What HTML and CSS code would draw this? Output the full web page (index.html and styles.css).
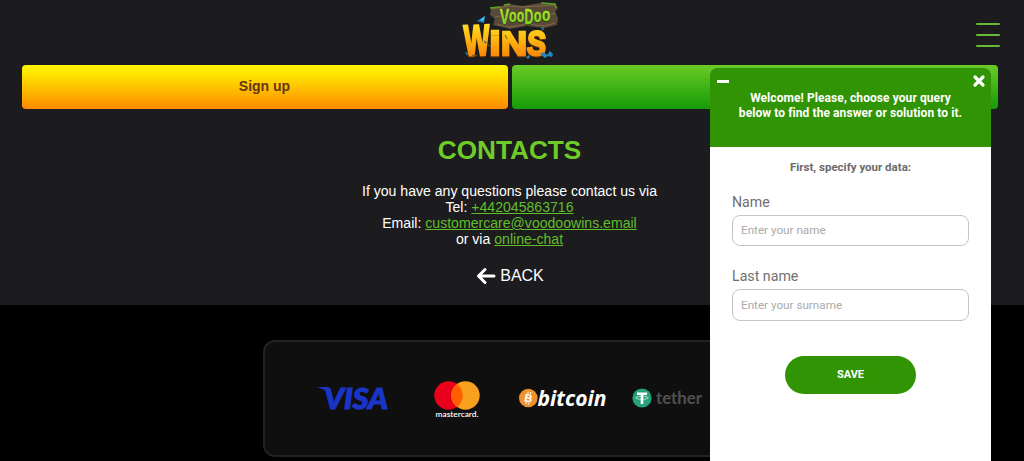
FILE: index.html
```html
<!DOCTYPE html>
<html lang="en">
<head>
<meta charset="utf-8">
<title>Voodoo Wins – Contacts</title>
<link rel="stylesheet" href="styles.css">
</head>
<body>
<div class="page">
  <header class="header">
    <svg class="logo" viewBox="0 0 120 65" role="img" aria-label="Voodoo Wins">
      <defs>
        <linearGradient id="gold" x1="0" y1="20" x2="0" y2="57" gradientUnits="userSpaceOnUse">
          <stop offset="0.05" stop-color="#ffe329"/><stop offset="0.5" stop-color="#ffb810"/><stop offset="1" stop-color="#f8860b"/>
        </linearGradient>
        <linearGradient id="slime" x1="0" y1="7" x2="0" y2="25" gradientUnits="userSpaceOnUse">
          <stop offset="0" stop-color="#b3e82b"/><stop offset="1" stop-color="#78cf20"/>
        </linearGradient>
      </defs>
      <path d="M41 8 60 4 72 6 90 3 105 4 108 8 105 12 108 18 107 25 94 28 77 26 60 29 43 25 45 19 40 15Z" fill="#594a38"/>
      <path d="M42 9 59 6 73 7 104 5M45 17 50 16M101 14 106 13M47 24 60 27 77 24 94 26 105 23" fill="none" stroke="#7e6846" stroke-width="1"/>
      <path d="M40 8 50 7M54 5 60 4M91 3 105 4 106 8" fill="none" stroke="#5ba420" stroke-width="1.500"/>
      <g class="logo-top">
        <text x="49.700" y="23.500" textLength="9.500" lengthAdjust="spacingAndGlyphs">V</text>
        <text x="59" y="22" textLength="7.600" lengthAdjust="spacingAndGlyphs" class="small">o</text>
        <text x="66.800" y="22" textLength="7.600" lengthAdjust="spacingAndGlyphs" class="small">o</text>
        <text x="74.500" y="23.500" textLength="9" lengthAdjust="spacingAndGlyphs">D</text>
        <text x="83.800" y="22" textLength="7.800" lengthAdjust="spacingAndGlyphs" class="small">o</text>
        <text x="92" y="21" textLength="8.500" lengthAdjust="spacingAndGlyphs" class="small">o</text>
      </g>
      <path d="M27 21 35 16 34 23Z" fill="#1689d2"/><path d="m30 20 5-4-2 5Z" fill="#5bc5ec"/>
      <g class="logo-main">
        <text x="14" y="55" textLength="25.500" font-size="43" lengthAdjust="spacingAndGlyphs" transform="rotate(-2 26 40)">W</text>
        <text x="39.500" y="55" textLength="11" font-size="33" lengthAdjust="spacingAndGlyphs">i</text>
        <text x="51" y="55" textLength="26" font-size="34" lengthAdjust="spacingAndGlyphs">N</text>
        <text x="77" y="55" textLength="19" font-size="34" lengthAdjust="spacingAndGlyphs" transform="rotate(3 86 45)">S</text>
      </g>
      <path d="m34 41 3 2 3 4M55 35 57 39M22 55l6 1M91 31l3-2" fill="none" stroke="#70551b"/>
      <path d="m15 52 3 1-1 3ZM90 54l4-2 3 3 3-4 3 3-1 3-4-1-3 2ZM76 57l3-2 1 2-2 2ZM34 41l2 1-1 2ZM91 28l3-1-1 3Z" fill="#2188bb"/>
    </svg>
    <button class="menu" aria-label="Menu"><span></span><span></span><span></span></button>
  </header>

  <div class="actions">
    <a class="action signup">Sign up</a>
    <a class="action login" aria-label="Log in"></a>
  </div>

  <main class="contacts">
    <h1>CONTACTS</h1>
    <p>If you have any questions please contact us via<br>
      Tel: <a>+442045863716</a><br>
      Email: <a>customercare@voodoowins.email</a><br>
      or via <a>online-chat</a></p>
    <div class="back">
      <svg width="20" height="18" viewBox="0 0 20 18"><path d="M9 2.500 2.500 9 9 15.500M3 9H18" fill="none" stroke="#fff" stroke-width="3" stroke-linecap="round" stroke-linejoin="round"/></svg>
      <span>BACK</span>
    </div>
  </main>
</div>

<footer class="footer">
  <div class="payments">
    <svg class="visa" width="70" height="24" viewBox="0 0 70 24" role="img">
      <path d="M0 1H8Q12 1 13 5L16 15Q11 4 0 1.500Z" fill="#1a35c6"/>
      <text x="6" y="22.700" textLength="64" lengthAdjust="spacingAndGlyphs">VISA</text>
    </svg>
    <svg class="mastercard" width="46" height="38" viewBox="0 0 46 38" role="img">
      <circle cx="14.500" cy="14.500" r="14.200" fill="#eb001b"/>
      <circle cx="31.500" cy="14.500" r="14.200" fill="#f9a01e"/>
      <path d="M23 3.100a14.200 14.200 0 0 1 0 22.800 14.200 14.200 0 0 1 0-22.800Z" fill="#ff5f00"/>
      <text x="1.500" y="35.500" textLength="43" lengthAdjust="spacingAndGlyphs">mastercard.</text>
    </svg>
    <svg class="bitcoin" width="88" height="24" viewBox="0 0 88 24" role="img">
      <circle cx="9.300" cy="11" r="9.300" fill="#f0922b"/>
      <text class="coin" x="5.500" y="14.800" transform="rotate(12 9 11)">B</text>
      <path d="m9.300 4.500-.4 2M11.800 5l-.4 2M7.500 15l-.4 2M10 15.500l-.4 2" stroke="#fff" stroke-width="1.100"/>
      <text class="word" x="18.500" y="19" textLength="69" lengthAdjust="spacingAndGlyphs">bitcoin</text>
    </svg>
    <svg class="tether" width="71" height="24" viewBox="0 0 71 24" role="img">
      <circle cx="10" cy="11" r="9.600" fill="#26a17b"/>
      <path d="M5 5.500H15V8.100H11.300V17H8.700V8.100H5Z" fill="#fff"/>
      <ellipse cx="10" cy="10.800" rx="6.300" ry="1.500" fill="none" stroke="#fff" stroke-width=".6"/>
      <text x="24" y="17" textLength="46" lengthAdjust="spacingAndGlyphs">tether</text>
    </svg>
  </div>
</footer>

<aside class="chat">
  <div class="chat-head">
    <span class="minimize"></span>
    <svg class="close" width="12" height="12" viewBox="0 0 12 12"><path d="m2 2 8 8M10 2l-8 8" stroke="#fff" stroke-width="3.200" stroke-linecap="round"/></svg>
    <p>Welcome! Please, choose your query<br>below to find the answer or solution to it.</p>
  </div>
  <form class="chat-form">
    <p class="intro">First, specify your data:</p>
    <label for="name">Name</label>
    <input id="name" placeholder="Enter your name">
    <label for="surname">Last name</label>
    <input id="surname" placeholder="Enter your surname">
    <button type="button">SAVE</button>
  </form>
</aside>
</body>
</html>
```
FILE: styles.css
```css
* { box-sizing: border-box; }
html { height: 100%; }
body {
  margin: 0;
  height: 461px;
  overflow: hidden;
  background: #000;
  color: #fff;
  font-family: "Liberation Sans", Arial, sans-serif;
}
svg { overflow: visible; }
.page { height: 305px; background: #1c1c1e; }
.header {
  display: grid;
  grid-template-columns: 450px 120px 1fr;
  height: 65px;
  padding-right: 24px;
}
.logo { grid-column: 2; width: 120px; height: 65px; }
.logo-top text { fill: url(#slime); stroke: url(#slime); stroke-width: .5px; font-family: "Liberation Sans", sans-serif; font-size: 22px; font-weight: 700; }
.logo-top { filter: drop-shadow(0 1px 0 #29340f); }
.logo-top .small { font-size: 19px; }
.logo-main { filter: drop-shadow(0 1px 0 #6b3208); }
.logo-main text { fill: url(#gold); stroke: url(#gold); stroke-width: 2.400px; font-family: "Liberation Sans", sans-serif; font-weight: 700; }
.menu {
  display: flex;
  flex-direction: column;
  justify-content: space-between;
  justify-self: end;
  width: 24px;
  height: 24px;
  margin-top: 23px;
  padding: 0;
  border: 0;
  background: none;
}
.menu span { height: 2px; border-radius: 1px; background: #66ba35; }
.actions {
  display: grid;
  grid-template-columns: 486px 486px;
  gap: 4px;
  height: 44px;
  padding-left: 21.500px;
}
.action {
  height: 44px;
  border-radius: 4px;
  font-size: 14px;
  font-weight: 700;
  line-height: 42px;
  text-align: center;
}
.signup { color: #653713; background: linear-gradient(#fff500, #ffe500 20%, #ff8a00); }
.login { background: linear-gradient(#6acb25, #169b08); }
.contacts { width: 1019px; text-align: center; }
h1 { margin: 26px 0 0; color: #6fcb27; font-size: 26.200px; line-height: 30px; }
.contacts p { margin: 18px 0 0; font-size: 14.080px; line-height: 16px; }
.contacts a { color: #61bd2b; text-decoration: underline; }
.back { display: flex; align-items: center; justify-content: center; gap: 4px; margin-top: 19px; padding-left: 1px; font-size: 16px; line-height: 20px; }
.footer { height: 156px; padding: 35px 0 0 263px; }
.payments {
  display: flex;
  align-items: flex-start;
  width: 493px;
  height: 117px;
  padding: 39px 0 0 53px;
  border: 2px solid #222;
  border-radius: 12px;
  background: #0f0f0f;
}
.payments svg { flex: none; }
.visa { margin-top: 5px; }
.visa text { fill: #1a35c6; stroke: #1a35c6; stroke-width: 1.200px; font: italic 900 29px Lato, sans-serif; }
.mastercard { margin-left: 46px; }
.mastercard text { fill: #fff; font: 600 8px Lato, sans-serif; }
.bitcoin { margin: 6px 0 0 39px; }
.bitcoin .word { fill: #fff; font: italic 700 22px "Open Sans", sans-serif; }
.bitcoin .coin { fill: #fff; font: 700 11px "Liberation Sans", sans-serif; }
.tether { margin: 6px 0 0 25px; }
.tether text { fill: #505052; font: 700 17px Lato, sans-serif; }
.chat {
  position: absolute;
  top: 68px;
  left: 710px;
  width: 281px;
  height: 393px;
  border-radius: 6px 6px 0 0;
  overflow: hidden;
  background: #fff;
  font-family: Roboto, sans-serif;
}
.chat-head { position: relative; height: 78.500px; padding-top: 23px; background: #309404; text-align: center; }
.chat-head p { margin: 0; font-size: 12px; font-weight: 700; line-height: 15px; letter-spacing: .08px; }
.minimize { position: absolute; top: 12px; left: 7px; width: 12px; height: 2.500px; background: #fff; }
.close { position: absolute; top: 7px; right: 6px; }
.chat-form { display: flex; flex-direction: column; padding: 12px 22px 0; }
.intro { margin: 0 0 18px; color: #6b6b6b; font-size: 11.500px; font-weight: 700; line-height: 16px; text-align: center; }
.chat-form label { color: #707070; font-size: 14.200px; line-height: 18px; }
.chat-form input {
  width: 237px;
  height: 31px;
  margin: 4px 0 21px;
  padding: 0 8px;
  border: 1px solid #c4c4c4;
  border-radius: 8px;
  color: #666;
  font: 11.700px Roboto, sans-serif;
}
.chat-form input::placeholder { color: #aaa; }
#surname { height: 32px; }
.chat-form button {
  align-self: center;
  width: 131px;
  height: 38px;
  margin-top: 14px;
  border: 0;
  border-radius: 19px;
  background: #309404;
  color: #fff;
  font: 700 11px Roboto, sans-serif;
}
```
